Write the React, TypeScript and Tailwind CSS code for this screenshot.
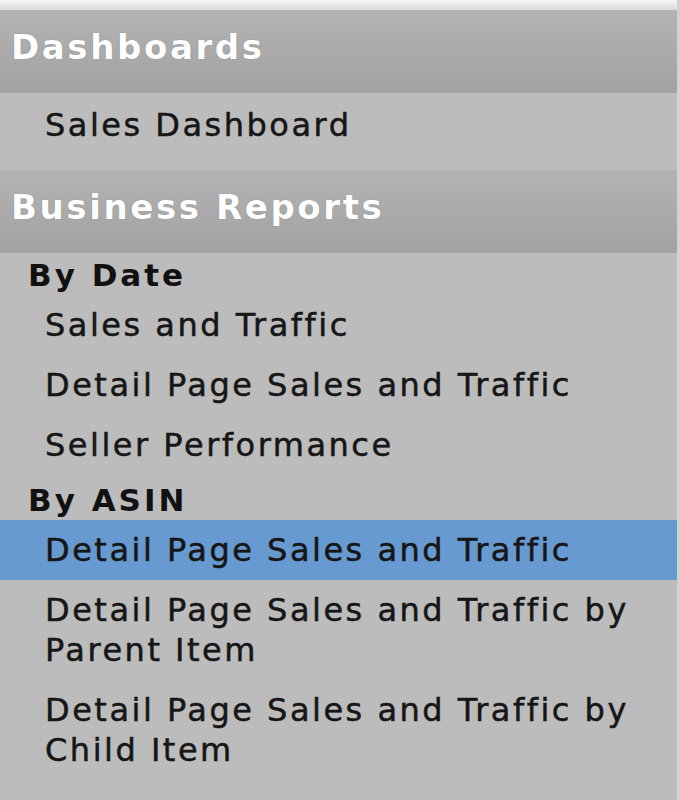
import React from 'react';

type Item = { label: string; active?: boolean };

const font = { fontFamily: '"DejaVu Sans", Verdana, sans-serif' };

const SectionHeader: React.FC<{ title: string }> = ({ title }) => (
  <div className="flex h-[83px] items-center bg-gradient-to-b from-[#b3b3b3] to-[#a2a2a2] pb-[8px] pl-[11px] text-[34px] font-bold tracking-[2.6px] text-white [text-shadow:0_0_1px_rgba(0,0,0,0.3)]">
    {title}
  </div>
);

const NavItem: React.FC<Item> = ({ label, active }) => (
  <div
    className={`py-[10px] pl-[45px] pr-[40px] text-[32px] leading-[40px] tracking-[2.5px] text-[#161616] [-webkit-text-stroke:0.5px_#161616] ${
      active ? 'bg-[#679ad0]' : ''
    }`}
  >
    {label}
  </div>
);

const GroupLabel: React.FC<{ label: string }> = ({ label }) => (
  <div className="pl-[28px] text-[31px] font-bold leading-[40px] tracking-[3px] text-[#111]">{label}</div>
);

export default function App() {
  return (
    <div className="min-h-[800px] w-[680px] border-r-[3px] border-[#d2d2d2] bg-[#bcbcbc]" style={font}>
      <div className="h-[10px] bg-gradient-to-b from-[#f6f6f6] to-[#d9d9d9]" />
      <SectionHeader title="Dashboards" />
      <div className="pb-[15px] pt-[2px]">
        <NavItem label="Sales Dashboard" />
      </div>

      <SectionHeader title="Business Reports" />
      <div className="pb-[20px] pt-[2px]">
        <GroupLabel label="By Date" />
        <NavItem label="Sales and Traffic" />
        <NavItem label="Detail Page Sales and Traffic" />
        <NavItem label="Seller Performance" />
        <div className="mt-[5px]">
          <GroupLabel label="By ASIN" />
        </div>
        <NavItem label="Detail Page Sales and Traffic" active />
        <NavItem label="Detail Page Sales and Traffic by Parent Item" />
        <NavItem label="Detail Page Sales and Traffic by Child Item" />
      </div>
    </div>
  );
}
